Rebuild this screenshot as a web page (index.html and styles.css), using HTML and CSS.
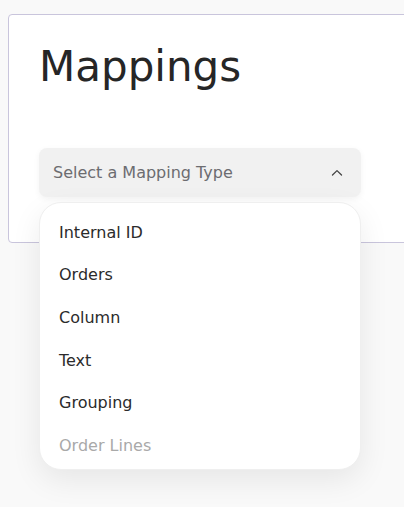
FILE: index.html
```html
<!DOCTYPE html>
<html lang="en">
<head>
<meta charset="utf-8">
<title>Mappings</title>
<link rel="stylesheet" href="styles.css">
</head>
<body>
  <main class="card">
    <h1 class="title">Mappings</h1>
    <div class="select-wrap">
      <div class="select">
        <span class="placeholder">Select a Mapping Type</span>
        <svg class="chevron" width="12" height="12" viewBox="0 0 12 12" aria-hidden="true">
          <path d="M1.5 8 L6 3.6 L10.5 8" fill="none" stroke="#444" stroke-width="1.3" stroke-linecap="round" stroke-linejoin="round"/>
        </svg>
      </div>
      <ul class="menu">
        <li class="item">Internal ID</li>
        <li class="item">Orders</li>
        <li class="item">Column</li>
        <li class="item">Text</li>
        <li class="item">Grouping</li>
        <li class="item faded">Order Lines</li>
      </ul>
    </div>
  </main>
</body>
</html>
```
FILE: styles.css
```css
html, body {
  overflow: hidden;
}
body {
  margin: 0;
  padding: 14px 0 0 8px;
  background: #f9f9f9;
  font-family: "DejaVu Sans", "Noto Sans", sans-serif;
  color: #2a2a2a;
  height: 507px;
  box-sizing: border-box;
}
.card {
  width: 520px;
  background: #ffffff;
  border: 1px solid #c9c5dc;
  border-radius: 4px;
  padding: 27px 30px 45px 30px;
  box-sizing: border-box;
}
.title {
  margin: 0 0 56px 0;
  font-size: 42px;
  line-height: 50px;
  font-weight: normal;
  color: #262626;
}
.select-wrap {
  position: relative;
  width: 322px;
}
.select {
  height: 49px;
  box-sizing: border-box;
  display: flex;
  align-items: center;
  justify-content: space-between;
  padding: 0 18px 0 14px;
  background: #f1f1f1;
  border-radius: 8px;
  box-shadow: 0 2px 6px rgba(0, 0, 0, 0.05);
}
.placeholder {
  font-size: 16px;
  color: #6c6c70;
}
.chevron {
  display: block;
}
.menu {
  position: absolute;
  top: calc(100% + 5px);
  left: 0;
  width: 100%;
  box-sizing: border-box;
  margin: 0;
  padding: 8px 0 2px 0;
  list-style: none;
  background: #ffffff;
  border: 1px solid #efefef;
  border-radius: 22px;
  box-shadow: 0 10px 30px rgba(0, 0, 0, 0.08);
}
.item {
  height: 42.6px;
  display: flex;
  align-items: center;
  padding-left: 19px;
  font-size: 16px;
  color: #2b2b2b;
}
.item.faded {
  color: #a9a9a9;
}
```
